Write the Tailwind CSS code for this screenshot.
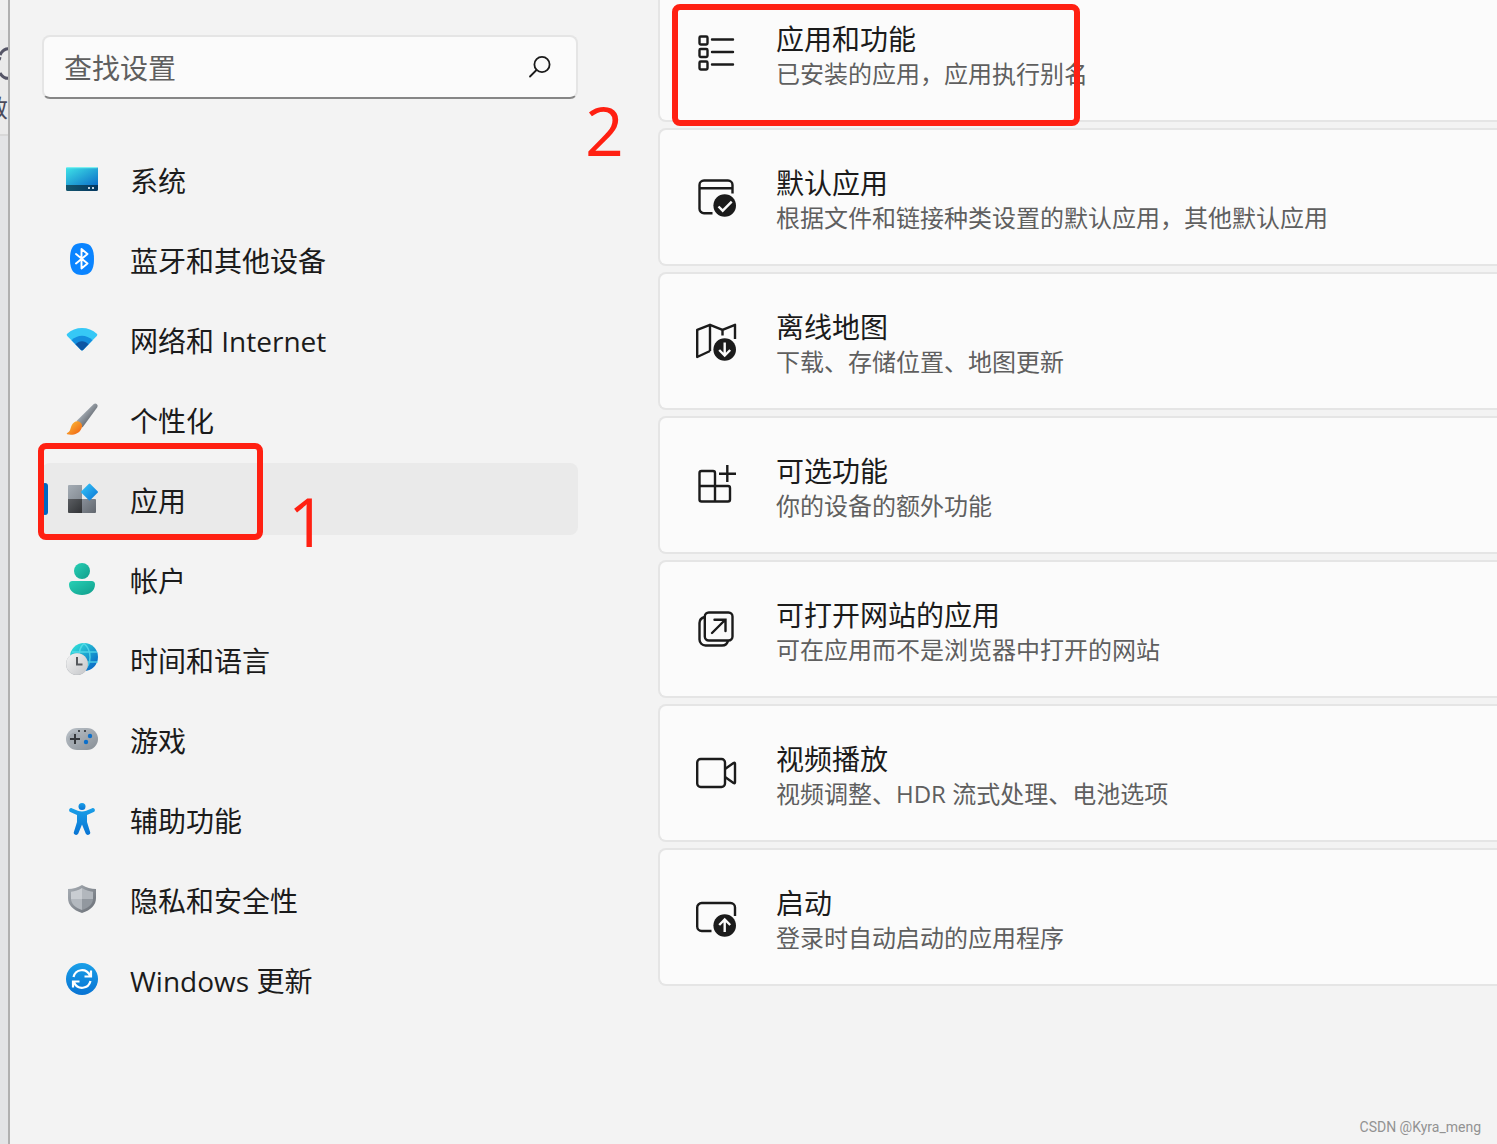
<!DOCTYPE html>
<html lang="zh-CN">
<head>
  <meta charset="UTF-8" />
  <title>设置 - 应用</title>
  <meta name="viewport" content="width=device-width, initial-scale=1.0" />
  <script src="https://cdn.jsdelivr.net/npm/@tailwindcss/browser@4"></script>
</head>
<body class="flex min-h-screen overflow-x-hidden bg-[#f3f3f3] text-[#1b1b1b] font-['Open_Sans','Noto_Sans_CJK_SC',sans-serif]">

  <!-- Window behind the settings window -->
  <div class="flex w-2.5 shrink-0 flex-col overflow-hidden border-r-2 border-[#b0b0b0] bg-[#e3e4e6]">
    <div class="h-[30px] bg-[#efefef]"></div>
    <div class="flex h-[106px] flex-col items-end border-b-2 border-[#d8d8d8] bg-[#eaeaea] pt-4">
      <svg class="h-10 w-2" viewBox="0 0 8 40" fill="none" stroke="#555566" stroke-width="3"><path d="M10 3C5 2 2 5 0 9M0 27C3 32 6 33 10 32M-2 12l3 1"/></svg>
      <span class="pt-1.5 text-2xl text-[#4a4a5a]">敏</span>
    </div>
  </div>

  <!-- Sidebar -->
  <aside class="relative w-[568px] shrink-0 pl-8 pt-[35px]">
    <form class="flex h-16 items-center rounded-lg border-2 border-[#e5e5e5] border-b-[#868686] bg-[#fbfbfb] pl-5 pr-6">
      <input type="search" aria-label="查找设置" placeholder="查找设置" class="min-w-0 flex-1 bg-transparent pt-0.5 text-[28px] leading-9 outline-none placeholder:text-[#5f5f5f]" />
      <button type="button" aria-label="搜索">
        <svg class="size-6" viewBox="0 0 24 24" fill="none" stroke="#1b1b1b" stroke-width="1.8" stroke-linecap="round"><circle cx="14" cy="9.500" r="7.600"/><path d="M8.500 15L2 21.500"/></svg>
      </button>
    </form>

    <nav class="mt-11">
      <ul class="flex flex-col gap-2 text-[28px] leading-9">
        <li>
          <a href="#" class="flex h-18 items-center gap-8 rounded-lg pl-6">
            <svg class="size-8" viewBox="0 0 32 32">
              <defs>
                <linearGradient id="screen" x1="0" y1="0" x2="1" y2="1"><stop stop-color="#3fe5e8"/><stop offset="1" stop-color="#0d6fc8"/></linearGradient>
                <linearGradient id="bar" x1="0" x2="1"><stop stop-color="#14566e"/><stop offset="1" stop-color="#03365f"/></linearGradient>
              </defs>
              <path d="M0 5.500A1.500 1.500 0 0 1 1.500 4h29A1.500 1.500 0 0 1 32 5.500V22H0z" fill="url(#screen)"/>
              <path d="M1 4.600h30" stroke="#7aeff0" stroke-width="1.200"/>
              <path d="M0 22h32v4.500a1.500 1.500 0 0 1-1.500 1.500h-29A1.500 1.500 0 0 1 0 26.500z" fill="url(#bar)"/>
              <path d="M22 24h2v2h-2zM26 24h2v2h-2z" fill="#c3d3df"/>
            </svg>
            <span class="pt-1">系统</span>
          </a>
        </li>
        <li>
          <a href="#" class="flex h-18 items-center gap-8 rounded-lg pl-6">
            <svg class="size-8" viewBox="0 0 32 32">
              <path d="M16 0C24 0 28 4 28 16s-4 16-12 16S4 28 4 16 8 0 16 0z" fill="#0a84ff"/>
              <path d="M10 11l11.500 9.500-6 5V6l6 5L10 20.500" fill="none" stroke="#fff" stroke-width="1.900" stroke-linejoin="round" stroke-linecap="round"/>
            </svg>
            <span class="pt-1">蓝牙和其他设备</span>
          </a>
        </li>
        <li>
          <a href="#" class="flex h-18 items-center gap-8 rounded-lg pl-6">
            <svg class="size-8" viewBox="0 0 32 32">
              <path d="M1.200 13a1.500 1.500 0 0 1 0-2.200C9 3.200 23 3.200 30.800 10.800a1.500 1.500 0 0 1 0 2.200L17 27a1.500 1.500 0 0 1-2 0z" fill="#36c8f6"/>
              <path d="M5.500 17.300c6-6.200 15-6.200 21 0L17 27a1.500 1.500 0 0 1-2 0z" fill="#148ede"/>
              <path d="M9.500 21.300c3.800-4 9.200-4 13 0L17 27a1.500 1.500 0 0 1-2 0z" fill="#0d56a4"/>
            </svg>
            <span class="pt-1">网络和 Internet</span>
          </a>
        </li>
        <li>
          <a href="#" class="flex h-18 items-center gap-8 rounded-lg pl-6">
            <svg class="size-8" viewBox="0 0 32 32">
              <defs>
                <linearGradient id="handle" x1="0" y1="0" x2="1" y2="1"><stop offset=".3" stop-color="#abb3bb"/><stop offset=".7" stop-color="#62676e"/></linearGradient>
                <linearGradient id="bristle" x1="0" y1="0" x2="1" y2="1"><stop stop-color="#fdc53b"/><stop offset="1" stop-color="#ee5a10"/></linearGradient>
              </defs>
              <path d="M10.500 18L27.500 1.200c2.300-2 5.300.6 3.600 3.200L16.500 24.500z" fill="url(#handle)"/>
              <path d="M8 19.500c4-3.500 10 1 7.500 6C13 31.500 6 32.500 1.200 31.300c-.7-.4-.5-1.300.3-1.600C5.500 28 3.700 23 8 19.500z" fill="url(#bristle)"/>
            </svg>
            <span class="pt-1">个性化</span>
          </a>
        </li>
        <li class="relative">
          <a href="#" aria-current="page" class="flex h-18 items-center gap-8 rounded-lg bg-[#eaeaea] pl-6">
            <svg class="size-8" viewBox="0 0 32 32">
              <defs>
                <linearGradient id="tileA" x1="0" y1="0" x2="1" y2="1"><stop stop-color="#a5adb5"/><stop offset="1" stop-color="#858c94"/></linearGradient>
                <linearGradient id="tileB" x1="0" y1="0" x2="1" y2="1"><stop stop-color="#5b5e62"/><stop offset="1" stop-color="#303235"/></linearGradient>
                <linearGradient id="tileC" x1="0" y1="0" x2="1" y2="1"><stop stop-color="#888f98"/><stop offset="1" stop-color="#62676e"/></linearGradient>
                <linearGradient id="gem" x1="0" y1="0" x2="1" y2="1"><stop stop-color="#37c8fa"/><stop offset="1" stop-color="#0a74d4"/></linearGradient>
              </defs>
              <path d="M2 3a1 1 0 0 1 1-1h13v14H2z" fill="url(#tileA)"/>
              <path d="M2 16h14v14H3a1 1 0 0 1-1-1z" fill="url(#tileB)"/>
              <path d="M16 16h13a1 1 0 0 1 1 1v12a1 1 0 0 1-1 1H16z" fill="url(#tileC)"/>
              <path d="M22.700.9q.8-.7 1.600 0l7.300 7.300q.7.8 0 1.600l-7.300 7.300q-.8.7-1.600 0l-7.300-7.300q-.7-.8 0-1.600z" fill="url(#gem)"/>
            </svg>
            <span class="pt-1">应用</span>
          </a>
          <span class="absolute left-0 top-5 h-8 w-1.5 rounded-full bg-[#0067c0]"></span>
          <!-- Step 1 mark -->
          <span class="absolute -left-1 -top-5 h-[97px] w-[225px] rounded-lg border-6 border-[#ff2012]"></span>
          <span class="absolute left-[246px] top-[22px] text-[68px] leading-18 text-[#ff2012]">1</span>
        </li>
        <li>
          <a href="#" class="flex h-18 items-center gap-8 rounded-lg pl-6">
            <svg class="size-8" viewBox="0 0 32 32">
              <defs><linearGradient id="user" x1="0" y1="0" x2="1" y2="1"><stop stop-color="#27d0b5"/><stop offset="1" stop-color="#109d8b"/></linearGradient></defs>
              <circle cx="16" cy="8" r="8" fill="url(#user)"/>
              <path d="M6.500 18h19a3.500 3.500 0 0 1 3.500 3.500C29 28 23 32 16 32S3 28 3 21.500A3.500 3.500 0 0 1 6.500 18z" fill="url(#user)"/>
            </svg>
            <span class="pt-1">帐户</span>
          </a>
        </li>
        <li>
          <a href="#" class="flex h-18 items-center gap-8 rounded-lg pl-6">
            <svg class="size-8" viewBox="0 0 32 32">
              <defs>
                <linearGradient id="globe" x1="0" y1="0" x2="1" y2="1"><stop offset=".1" stop-color="#30dfd8"/><stop offset=".9" stop-color="#0866c6"/></linearGradient>
                <linearGradient id="clock" x1="0" y1="0" x2="1" y2="1"><stop stop-color="#f5f5f5"/><stop offset="1" stop-color="#c3c5c8"/></linearGradient>
              </defs>
              <circle cx="18" cy="14" r="14" fill="url(#globe)"/>
              <path d="M6 9h25M20 19h12M18 .5c-3.500 3-5 8-5 13M18 .5c8 7 8 20 0 27" fill="none" stroke="#5fe0ee" stroke-opacity=".75" stroke-width="1.500"/>
              <circle cx="11" cy="21.300" r="11" fill="#aaaeb3"/>
              <circle cx="11" cy="21" r="10.800" fill="url(#clock)"/>
              <path d="M11 14v7.500h5.500" fill="none" stroke="#55585c" stroke-width="2"/>
            </svg>
            <span class="pt-1">时间和语言</span>
          </a>
        </li>
        <li>
          <a href="#" class="flex h-18 items-center gap-8 rounded-lg pl-6">
            <svg class="size-8" viewBox="0 0 32 32">
              <defs><linearGradient id="pad" x1="0" y1="0" x2="1" y2="1"><stop stop-color="#bcc3ca"/><stop offset="1" stop-color="#878e95"/></linearGradient></defs>
              <rect y="5" width="32" height="22" rx="11" fill="url(#pad)"/>
              <circle cx="9" cy="16" r="6.500" fill="#a2a9b0"/>
              <path d="M9 11v10M4 16h10" stroke="#34373b" stroke-width="2"/>
              <path d="M12 7h2v2h-2zM18 7h2v2h-2z" fill="#45494e"/>
              <circle cx="24" cy="13" r="2.200" fill="#0c6fca"/><circle cx="20" cy="19" r="2.200" fill="#0c6fca"/>
            </svg>
            <span class="pt-1">游戏</span>
          </a>
        </li>
        <li>
          <a href="#" class="flex h-18 items-center gap-8 rounded-lg pl-6">
            <svg class="size-8" viewBox="0 0 32 32">
              <defs><linearGradient id="person" x1="0" y1="0" x2="0" y2="1"><stop stop-color="#1a9fe8"/><stop offset="1" stop-color="#0873d3"/></linearGradient></defs>
              <g fill="url(#person)">
                <circle cx="16" cy="3.500" r="3.500"/>
                <path d="M5.800 5.200l6 2.500q4.200 1.500 8.400 0l6-2.500c2.600-.8 3.700 2.700 1.500 3.800L21 12v7l3.200 10.200c.6 2.500-3.300 4-4.500 1.400L16 21.500l-3.700 9.100c-1.200 2.600-5.100 1.100-4.500-1.400L11 19v-7L4.300 9C2.100 7.900 3.200 4.400 5.800 5.200z"/>
              </g>
            </svg>
            <span class="pt-1">辅助功能</span>
          </a>
        </li>
        <li>
          <a href="#" class="flex h-18 items-center gap-8 rounded-lg pl-6">
            <svg class="size-8" viewBox="0 0 32 32">
              <defs>
                <linearGradient id="rim" x1="0" y1="0" x2="1" y2="1"><stop stop-color="#a9afb6"/><stop offset="1" stop-color="#686d74"/></linearGradient>
              </defs>
              <path d="M16 2c4.500 3 9 3.700 14 4v9c0 7-5 12-14 15C7 27 2 22 2 15V6c5-.3 9.500-1 14-4z" fill="url(#rim)"/>
              <path d="M16 5C12.500 7.200 9 8.300 5 8.700V16h11z" fill="#c9cdd2"/>
              <path d="M16 5c3.500 2.200 7 3.300 11 3.700V16H16z" fill="#b2b7bd"/>
              <path d="M5 16c.3 5 4 8.600 11 11V16z" fill="#b4b9bf"/>
              <path d="M27 16c-.3 5-4 8.600-11 11V16z" fill="#92989f"/>
            </svg>
            <span class="pt-1">隐私和安全性</span>
          </a>
        </li>
        <li>
          <a href="#" class="flex h-18 items-center gap-8 rounded-lg pl-6">
            <svg class="size-8" viewBox="0 0 32 32">
              <circle cx="16" cy="16" r="16" fill="url(#person)"/>
              <path d="M7.500 14C9.500 6 20 4.500 24 12.500M25 7.500v6h-6.500M24.500 18C22.500 26 12 27.500 8 19.500M7 24.500v-6h6.500" fill="none" stroke="#fff" stroke-width="2.200"/>
            </svg>
            <span class="pt-1">Windows 更新</span>
          </a>
        </li>
      </ul>
    </nav>

    <!-- Step 2 mark -->
    <span class="absolute left-[575px] top-[94px] text-[68px] leading-18 text-[#ff2012]">2</span>
  </aside>

  <!-- App settings -->
  <main class="min-w-0 flex-1 pl-20">
    <ul class="-mt-4 flex flex-col gap-1.5">
      <li class="relative">
        <a href="#" class="flex items-center gap-9 rounded-l-lg border-2 border-r-0 border-[#e5e5e5] bg-[#fbfbfb] pb-[29px] pl-8 pt-[35px]">
          <svg class="size-12 shrink-0" viewBox="0 0 48 48" fill="none" stroke="#1b1b1b" stroke-width="2.400" stroke-linecap="round">
            <rect x="7.500" y="4.500" width="8" height="8" rx="1.200"/><rect x="7.500" y="17" width="8" height="8" rx="1.200"/><rect x="7.500" y="29.500" width="8" height="8" rx="1.200"/>
            <path d="M20 7.500h21M20 20h21M20 32.500h21"/>
          </svg>
          <span class="min-w-0 whitespace-nowrap">
            <span class="block text-[28px] leading-9">应用和功能</span>
            <span class="block text-2xl leading-[34px] text-[#5f5f5f]">已安装的应用，应用执行别名</span>
          </span>
        </a>
        <span class="absolute left-3.5 top-5 h-[122px] w-[408px] rounded-lg border-6 border-[#ff2012]"></span>
      </li>
      <li>
        <a href="#" class="flex items-center gap-9 rounded-l-lg border-2 border-r-0 border-[#e5e5e5] bg-[#fbfbfb] pb-[29px] pl-8 pt-[35px]">
          <svg class="size-12 shrink-0" viewBox="0 0 48 48" fill="none" stroke="#1b1b1b" stroke-width="2.400">
            <path d="M20.500 37.200H12a4.500 4.500 0 0 1-4.500-4.500V9A4.500 4.500 0 0 1 12 4.500h24A4.500 4.500 0 0 1 40.500 9v8.500M7.500 12.300h33"/>
            <circle cx="32.700" cy="29.500" r="11.300" fill="#1b1b1b" stroke="none"/>
            <path d="M26.500 30.500l4.200 4.200 9-9" stroke="#fbfbfb"/>
          </svg>
          <span class="min-w-0 whitespace-nowrap">
            <span class="block text-[28px] leading-9">默认应用</span>
            <span class="block text-2xl leading-[34px] text-[#5f5f5f]">根据文件和链接种类设置的默认应用，其他默认应用</span>
          </span>
        </a>
      </li>
      <li>
        <a href="#" class="flex items-center gap-9 rounded-l-lg border-2 border-r-0 border-[#e5e5e5] bg-[#fbfbfb] pb-[29px] pl-8 pt-[35px]">
          <svg class="size-12 shrink-0" viewBox="0 0 48 48" fill="none" stroke="#1b1b1b" stroke-width="2.400">
            <path d="M18 31L5.200 37V9.800L18 4.800l12.500 5L43 4.800V19M18 4.800V31M30.500 9.800V15.500" stroke-linejoin="round"/>
            <circle cx="32.700" cy="29.500" r="11.300" fill="#1b1b1b" stroke="none"/>
            <path d="M32.700 22.500v13M27.200 30l5.500 5.500 5.500-5.500" stroke="#fbfbfb"/>
          </svg>
          <span class="min-w-0 whitespace-nowrap">
            <span class="block text-[28px] leading-9">离线地图</span>
            <span class="block text-2xl leading-[34px] text-[#5f5f5f]">下载、存储位置、地图更新</span>
          </span>
        </a>
      </li>
      <li>
        <a href="#" class="flex items-center gap-9 rounded-l-lg border-2 border-r-0 border-[#e5e5e5] bg-[#fbfbfb] pb-[29px] pl-8 pt-[35px]">
          <svg class="size-12 shrink-0" viewBox="0 0 48 48" fill="none" stroke="#1b1b1b" stroke-width="2.400">
            <path d="M23 22V9a2 2 0 0 0-2-2H9.500a2 2 0 0 0-2 2v26.500a2 2 0 0 0 2 2H36a2 2 0 0 0 2-2V24a2 2 0 0 0-2-2H7.500M23 22v15.500M35.300 1v17M27 9.700h17"/>
          </svg>
          <span class="min-w-0 whitespace-nowrap">
            <span class="block text-[28px] leading-9">可选功能</span>
            <span class="block text-2xl leading-[34px] text-[#5f5f5f]">你的设备的额外功能</span>
          </span>
        </a>
      </li>
      <li>
        <a href="#" class="flex items-center gap-9 rounded-l-lg border-2 border-r-0 border-[#e5e5e5] bg-[#fbfbfb] pb-[29px] pl-8 pt-[35px]">
          <svg class="size-12 shrink-0" viewBox="0 0 48 48" fill="none" stroke="#1b1b1b" stroke-width="2.400">
            <rect x="12.800" y="4.500" width="27.700" height="28" rx="4"/>
            <path d="M12.800 9C9 10 7.500 12 7.500 15v16.500a6 6 0 0 0 6 6H30c3 0 5.500-2 6-5"/>
            <path d="M20 25L33 12M22.500 11.800H33.500V23" stroke-linecap="round"/>
          </svg>
          <span class="min-w-0 whitespace-nowrap">
            <span class="block text-[28px] leading-9">可打开网站的应用</span>
            <span class="block text-2xl leading-[34px] text-[#5f5f5f]">可在应用而不是浏览器中打开的网站</span>
          </span>
        </a>
      </li>
      <li>
        <a href="#" class="flex items-center gap-9 rounded-l-lg border-2 border-r-0 border-[#e5e5e5] bg-[#fbfbfb] pb-[29px] pl-8 pt-[35px]">
          <svg class="size-12 shrink-0" viewBox="0 0 48 48" fill="none" stroke="#1b1b1b" stroke-width="2.400">
            <rect x="5.200" y="7" width="27.800" height="28" rx="3.500"/>
            <path d="M33 17l8.500-6q1.500-.8 1.500.8v18.400q0 1.600-1.500.8L33 25"/>
          </svg>
          <span class="min-w-0 whitespace-nowrap">
            <span class="block text-[28px] leading-9">视频播放</span>
            <span class="block text-2xl leading-[34px] text-[#5f5f5f]">视频调整、HDR 流式处理、电池选项</span>
          </span>
        </a>
      </li>
      <li>
        <a href="#" class="flex items-center gap-9 rounded-l-lg border-2 border-r-0 border-[#e5e5e5] bg-[#fbfbfb] pb-[29px] pl-8 pt-[35px]">
          <svg class="size-12 shrink-0" viewBox="0 0 48 48" fill="none" stroke="#1b1b1b" stroke-width="2.400">
            <path d="M19.500 35H9.700a4.500 4.500 0 0 1-4.500-4.500v-19A4.500 4.500 0 0 1 9.700 7h28.800a4.500 4.500 0 0 1 4.500 4.500V20"/>
            <circle cx="32.700" cy="29.500" r="11.300" fill="#1b1b1b" stroke="none"/>
            <path d="M32.700 36v-12M27.200 29l5.500-5.500 5.500 5.500" stroke="#fbfbfb"/>
          </svg>
          <span class="min-w-0 whitespace-nowrap">
            <span class="block text-[28px] leading-9">启动</span>
            <span class="block text-2xl leading-[34px] text-[#5f5f5f]">登录时自动启动的应用程序</span>
          </span>
        </a>
      </li>
    </ul>
  </main>

  <!-- Watermark -->
  <footer class="absolute bottom-[7px] right-4 font-[Roboto,sans-serif] text-sm text-[#929292]">CSDN @Kyra_meng</footer>
</body>
</html>
